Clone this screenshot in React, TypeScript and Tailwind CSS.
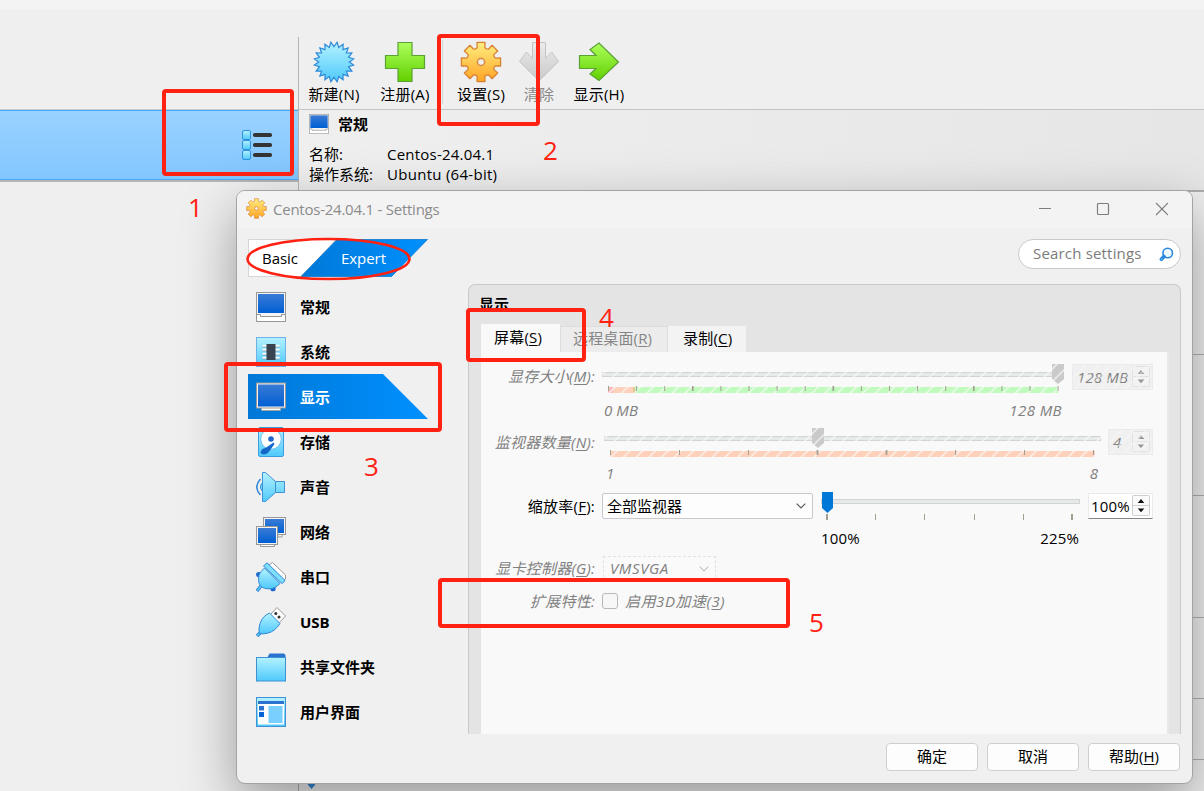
import type { ReactNode } from 'react';

const NAV_ITEMS = [
  { label: '常规', icon: GeneralIcon },
  { label: '系统', icon: SystemIcon },
  { label: '显示', icon: DisplayIcon, active: true },
  { label: '存储', icon: StorageIcon },
  { label: '声音', icon: AudioIcon },
  { label: '网络', icon: NetworkIcon },
  { label: '串口', icon: SerialIcon },
  { label: 'USB', icon: UsbIcon },
  { label: '共享文件夹', icon: FolderIcon },
  { label: '用户界面', icon: InterfaceIcon },
];

// Section dividers of the details pane that stay visible right of the dialog
const DETAIL_LINES = [163, 141, 122, 81, 61];

export default function App() {
  return (
    <div className="relative flex h-[791px] w-[1204px] flex-col overflow-hidden bg-[#efefef] font-['Open_Sans','Noto_Sans_CJK_SC',sans-serif] text-[15px] leading-5 text-black">
      <Gradients />
      <div className="h-[9px] shrink-0 bg-[#f3f3f3]" />
      <div className="flex min-h-0 flex-1">
        <MachineList />
        <main className="mt-7 flex flex-1 flex-col border-l border-[#b4b4b4]">
          <Toolbar />
          <Details />
        </main>
      </div>
      <SettingsDialog />
      <Annotations />
    </div>
  );
}

function MachineList() {
  return (
    <aside className="w-[298px] pt-[100px]">
      <div className="border-b-2 border-t border-b-[#b5b5b5] border-t-[#c8c8c8]">
        <div className="flex h-[70px] items-center justify-end border-y border-[#44aaff] bg-linear-to-b from-[#9ad2ff] to-[#82c6ff] pr-[25px]">
          <svg width="32" height="32" viewBox="0 0 32 32">
            {[1, 11, 21].map((y) => (
              <g key={y}>
                <rect x="1.5" y={y + 0.5} width="8" height="9" rx="1.5" fill="url(#sky)" stroke="#2f90e0" />
                <rect x="12" y={y + 3} width="19" height="4" rx="1.8" fill="#343434" />
              </g>
            ))}
          </svg>
        </div>
      </div>
    </aside>
  );
}

function Toolbar() {
  return (
    <div className="flex h-[73px] shrink-0 border-b border-[#c4c4c4]">
      <ToolButton className="w-[70px]" label="新建(N)" icon={<NewIcon />} />
      <ToolButton className="w-[72px]" label="注册(A)" icon={<AddIcon />} />
      <div className="mt-[3px] h-16 w-0.5 border-r border-[#d4d4d4]" />
      <ToolButton className="w-[76px]" label="设置(S)" icon={<GearIcon size={42} />} />
      <ToolButton className="w-10 text-[#8a8a8a]" label="清除" icon={<DiscardIcon />} />
      <ToolButton className="w-20" label="显示(H)" icon={<ShowIcon />} />
    </div>
  );
}

function ToolButton({ label, icon, className }: { label: string; icon: ReactNode; className: string }) {
  return (
    <div className={`flex flex-col items-center pt-1 ${className}`}>
      {icon}
      <span className="mt-px whitespace-nowrap tracking-[0.2px]">{label}</span>
    </div>
  );
}

function Details() {
  return (
    <div className="flex flex-1 flex-col">
      <div className="h-[82px] shrink-0 border-b-2 border-[#adadad] bg-linear-to-r from-[#efefef] to-[#e6e6e6] pl-2.5 pt-[3px]">
        <div className="flex items-center gap-[9px]">
          <GeneralIcon size={20} />
          <span className="text-[15px] font-bold leading-[22px]">常规</span>
        </div>
        <dl className="mt-[9px] grid grid-cols-[78px_1fr]">
          <dt>名称:</dt>
          <dd className="tracking-[0.22px]">Centos-24.04.1</dd>
          <dt>操作系统:</dt>
          <dd className="tracking-[0.28px]">Ubuntu (64-bit)</dd>
        </dl>
      </div>
      {DETAIL_LINES.map((h) => (
        <div key={h} className="shrink-0 border-b border-[#b0b0b0]" style={{ height: h }} />
      ))}
      <svg className="ml-2" width="9" height="32" viewBox="0 0 9 32">
        <path d="M1 22h7v3l-3.500 4L1 25z" fill="#3488d6" />
      </svg>
    </div>
  );
}

function SettingsDialog() {
  return (
    <div className="absolute left-[236px] top-[190px] flex h-[594px] w-[957px] flex-col overflow-hidden rounded-[9px] border border-[#a3a3a3] bg-[#f0f0f0] shadow-[0_20px_54px_rgba(0,0,0,0.36)]">
      <TitleBar />
      <div className="flex justify-between pl-[11px] pr-[11px] pt-[11px]">
        <ModeSwitch />
        <div className="flex h-[30px] w-[163px] items-center justify-between rounded-full border-[1.5px] border-[#c9c9c9] bg-white pl-3.5 pr-1.5 text-[#7b7b7b]">
          <span className="whitespace-nowrap pb-0.5 tracking-[0.18px]">Search settings</span>
          <SearchIcon />
        </div>
      </div>
      <div className="flex">
        <nav className="w-[231px] pl-[11px] pt-[7px]">
          {NAV_ITEMS.map((item) => (
            <NavItem key={item.label} {...item} />
          ))}
        </nav>
        <DisplayPage />
      </div>
      <div className="flex justify-end gap-[9px] pr-3 pt-[9px]">
        <DialogButton>确定</DialogButton>
        <DialogButton>取消</DialogButton>
        <DialogButton>
          帮助(<Key>H</Key>)
        </DialogButton>
      </div>
    </div>
  );
}

function TitleBar() {
  return (
    <header className="flex h-[37px] shrink-0 items-center justify-between bg-[#f3f3f3] pb-0.5 pl-[9px] pr-6 text-[#8b8b8b]">
      <div className="flex items-center gap-1.5">
        <GearIcon size={21} />
        <span className="tracking-[-0.24px]">Centos-24.04.1 - Settings</span>
      </div>
      <svg width="130" height="14" viewBox="0 0 130 14" fill="none" stroke="#7e7e7e">
        <path d="M1 6.5h12" />
        <rect x="59.5" y="1.5" width="11" height="11" rx="1" strokeWidth="1.2" />
        <path d="M118 1l12 12M130 1l-12 12" strokeWidth="1.1" />
      </svg>
    </header>
  );
}

function ModeSwitch() {
  return (
    <div className="relative h-[38px] w-[180px]">
      <svg className="absolute inset-0" width="180" height="38" viewBox="0 0 180 38">
        <path d="M.5.5H88L53 37.5H.5z" fill="#fff" stroke="#d5d5d5" />
        <path d="M89 .5h90.5l-36 37H53z" fill="url(#accent)" stroke="#0a78cf" strokeWidth=".8" />
      </svg>
      <div className="relative flex pl-3.5 pt-[9px]">
        <span className="w-[79px] tracking-[-0.05px]">Basic</span>
        <span className="tracking-[-0.05px] text-white">Expert</span>
      </div>
    </div>
  );
}

type IconProps = { size?: number };

function NavItem({ label, icon: Icon, active }: { label: string; icon: (p: IconProps) => ReactNode; active?: boolean }) {
  return (
    <div
      className={`flex h-[45px] w-[180px] items-center gap-3.5 pl-2 font-bold ${
        active ? 'bg-linear-to-r from-[#0078d7] to-[#0090ff] text-white [clip-path:polygon(0_0,75%_0,100%_100%,0_100%)]' : ''
      }`}
    >
      <Icon />
      <span className="whitespace-nowrap">{label}</span>
    </div>
  );
}

function DisplayPage() {
  return (
    <section className="mt-[7px] flex h-[450px] w-[713px] flex-col rounded-t-[7px] border border-b-0 border-[#c9c9c9] bg-[#e4e4e4] pl-3 pr-[11px]">
      <h2 className="-ml-0.5 h-[39px] pt-[9px] font-bold">显示</h2>
      <div className="flex items-end">
        <div className="h-7 w-[79px] bg-[#f9f9f9] pl-[13px] pt-[3px] tracking-[0.2px]">
          屏幕(<Key>S</Key>)
        </div>
        <div className="h-[26px] w-[108px] border border-b-0 border-[#dcdcdc] bg-[#ececec] pl-3 pt-px tracking-[0.15px] text-[#868686]">
          远程桌面(<Key>R</Key>)
        </div>
        <div className="h-[26px] w-[78px] bg-[#f3f3f3] pl-[15px] pt-0.5 tracking-[0.2px]">
          录制(<Key>C</Key>)
        </div>
      </div>
      <div className="flex-1 border-r-2 border-[#e9e9e9] bg-[#f9f9f9]">
        <MemoryRow />
        <MonitorRow />
        <ScaleRow />
        <div className="flex h-[33px] items-center italic text-[#808080]">
          <Label className="pb-0.5">
            显卡控制器(<Key>G</Key>):
          </Label>
          <div className="ml-2 flex h-[26px] w-[113px] items-center justify-between border border-dashed border-[#e2e2e2] bg-[#fafafa] px-1.5">
            <span className="pb-0.5 tracking-[0.6px]">VMSVGA</span>
            <Chevron color="#c2c2c2" />
          </div>
        </div>
        <div className="flex h-[33px] items-center italic text-[#808080]">
          <Label className="pb-0.5">扩展特性:</Label>
          <span className="mb-0.5 ml-[7px] mr-[7px] size-4 rounded-[3px] border border-[#b9b9b9] bg-[#f7f7f7]" />
          <span className="pb-0.5 tracking-[0.55px]">
            启用3D加速(<Key>3</Key>)
          </span>
        </div>
      </div>
    </section>
  );
}

function MemoryRow() {
  const ticks = Array.from({ length: 17 }, (_, i) => 6.5 + i * 28.1);
  return (
    <div className="flex h-[72px] italic text-[#808080]">
      <Label className="pt-3.5">
        显存大小(<Key>M</Key>):
      </Label>
      <div className="ml-[7px] mt-2.5 w-[463px]">
        <svg className="block" width="463" height="36" viewBox="0 0 463 36">
          <rect x=".5" y="10.5" width="456" height="4" fill="#e7eaea" stroke="#d3d3d3" />
          <rect x="6" y="25" width="5" height="6" fill="#ffb9b9" />
          <rect x="11" y="25" width="21" height="6" fill="#ffd0ba" />
          <rect x="31" y="25" width="2" height="6" fill="#dcca90" />
          <rect x="33" y="25" width="423" height="6" fill="#c0fbbd" />
          <rect y="2" width="463" height="30" fill="url(#hatch)" />
          {ticks.map((x, i) => (
            <path key={x} d={`M${x} 24v5`} stroke="#a39f92" strokeWidth={i % 5 === 3 ? 1.7 : 1} />
          ))}
          <path d="M450 2h12v15l-6 5-6-5z" fill="#cacaca" />
          <rect x="449" y="2" width="14" height="21" fill="url(#hatch)" />
        </svg>
        <div className="flex justify-between pl-0.5 pr-[3px] pt-0.5 tracking-[0.1px]">
          <span>0 MB</span>
          <span className="tracking-[0.4px]">128 MB</span>
        </div>
      </div>
      <Spinner className="ml-[7px] mt-3 w-[81px] pl-1" value="128 MB" disabled />
    </div>
  );
}

function MonitorRow() {
  return (
    <div className="flex h-16 italic text-[#808080]">
      <Label className="pt-2">
        监视器数量(<Key>N</Key>):
      </Label>
      <div className="ml-[9px] mt-0.5 w-[497px]">
        <svg className="block" width="497" height="34" viewBox="0 0 497 34">
          <rect x=".5" y="10.5" width="496" height="4" fill="#e7eaea" stroke="#d3d3d3" />
          <rect x="6" y="25" width="485" height="6" fill="#ffd0ba" />
          <rect y="2" width="497" height="30" fill="url(#hatch)" />
          {Array.from({ length: 8 }, (_, i) => (
            <path key={i} d={`M${6.5 + i * 69} 24v5`} stroke="#a39f92" strokeWidth={i === 3 || i === 4 ? 1.8 : 1} />
          ))}
          <path d="M208 2h12v15l-6 5-6-5z" fill="#cacaca" />
          <rect x="207" y="2" width="14" height="21" fill="url(#hatch)" />
        </svg>
        <div className="flex justify-between pl-0.5 pr-[3px] pt-[3px]">
          <span>1</span>
          <span>8</span>
        </div>
      </div>
      <Spinner className="ml-[7px] mt-[5px] w-[45px] pl-1" value="4" disabled />
    </div>
  );
}

function ScaleRow() {
  return (
    <div className="flex h-16">
      <Label className="pt-2">
        缩放率(<Key>F</Key>):
      </Label>
      <div className="ml-[7px] mt-[5px] flex h-[26px] w-[211px] items-center justify-between rounded-[2px] border border-[#c9c9c9] bg-[#fdfdfd] pl-1 pr-1.5">
        全部监视器
        <Chevron color="#5c5c5c" />
      </div>
      <div className="ml-[7px] w-[260px]">
        <svg className="block" width="260" height="36" viewBox="0 0 260 36">
          <rect x="1.5" y="11.5" width="258" height="4" fill="#e7eaea" stroke="#d3d3d3" />
          {[7, 55.5, 104.5, 154.5, 203.5, 252].map((x, i) => (
            <path key={x} d={`M${x} 26v6`} stroke="#a39f92" strokeWidth={i % 5 === 0 ? 2 : 1} />
          ))}
          <path d="M2 4h11v16l-5.5 5L2 20z" fill="#0078d7" />
        </svg>
        <div className="flex justify-between pl-px pr-px pt-1 tracking-[0.15px]">
          <span>100%</span>
          <span>225%</span>
        </div>
      </div>
      <Spinner className="ml-2 mt-[5px] w-[65px] pl-0.5" value="100%" />
    </div>
  );
}

function Label({ children, className = '' }: { children: ReactNode; className?: string }) {
  return <div className={`w-[114px] shrink-0 whitespace-nowrap text-right tracking-[0.25px] ${className}`}>{children}</div>;
}

function Spinner({ value, disabled, className }: { value: string; disabled?: boolean; className: string }) {
  const line = disabled ? '#e2e2e2' : '#cfcfcf';
  return (
    <div
      className={`relative flex h-[26px] items-center justify-between border pr-px ${
        disabled ? 'border-[#ebebeb] bg-[#f0f0f0]' : 'border-[#ebebeb] border-b-[#858585] bg-white'
      } ${className}`}
    >
      <span className="whitespace-nowrap tracking-[0.15px]">{value}</span>
      <svg className="shrink-0" width="19" height="22" viewBox="0 0 19 22">
        <rect x=".5" y=".5" width="17" height="20" rx="1" fill={disabled ? '#f2f2f2' : '#fafafa'} stroke={line} />
        <path d="M.5 10.5h17" stroke={line} />
        <path d="M9 4l3.3 4H5.7zM9 17.3l3.3-3.8H5.7z" fill={disabled ? '#969696' : '#111'} />
      </svg>
      {disabled && (
        <svg className="absolute inset-0 size-full opacity-70">
          <rect width="100%" height="100%" fill="url(#hatch)" />
        </svg>
      )}
    </div>
  );
}

function DialogButton({ children }: { children: ReactNode }) {
  return (
    <button className="h-7 w-[92px] rounded-[4px] border border-[#cfcfcf] bg-[#fdfdfd] pb-0.5 text-center">{children}</button>
  );
}

// Mnemonic letter
function Key({ children }: { children: ReactNode }) {
  return <u className="underline decoration-1 underline-offset-2">{children}</u>;
}

function Chevron({ color }: { color: string }) {
  return (
    <svg width="10" height="6" viewBox="0 0 10 6" fill="none" stroke={color} strokeWidth="1.2">
      <path d="M.7.7L5 5 9.3.7" />
    </svg>
  );
}

function Annotations() {
  return (
    <div className="pointer-events-none absolute inset-0 text-[26px] leading-5 text-[#ff2213]">
      <Mark className="left-[162px] top-[89px] h-[87px] w-[132px]" />
      <Mark className="left-[437px] top-[34px] h-[92px] w-[103px]" />
      <Mark className="left-[224px] top-[362px] h-[70px] w-[218px]" />
      <Mark className="left-[466px] top-[308px] h-[54px] w-[120px]" />
      <Mark className="left-[438px] top-[578px] h-[50px] w-[352px]" />
      <svg className="absolute left-[245px] top-[237px]" width="168" height="45" viewBox="0 0 168 45">
        <ellipse cx="83.5" cy="22" rx="81" ry="20" fill="none" stroke="#ff2213" strokeWidth="2.6" />
      </svg>
      <span className="absolute left-[188px] top-[197px]">1</span>
      <span className="absolute left-[543px] top-[140px]">2</span>
      <span className="absolute left-[364px] top-[456px]">3</span>
      <span className="absolute left-[599px] top-[307px]">4</span>
      <span className="absolute left-[809px] top-[612px]">5</span>
    </div>
  );
}

function Mark({ className }: { className: string }) {
  return <div className={`absolute rounded-[4px] border-4 border-[#ff2213] ${className}`} />;
}

function Gradients() {
  return (
    <svg className="absolute" width="0" height="0">
      <defs>
        <linearGradient id="sky" x2="0" y2="1">
          <stop stopColor="#b4f2ff" />
          <stop offset="1" stopColor="#4fc9fb" />
        </linearGradient>
        <linearGradient id="screen" x2="0" y2="1">
          <stop stopColor="#3a7bd5" />
          <stop offset="1" stopColor="#005fd3" />
        </linearGradient>
        <linearGradient id="green" x2="0" y2="1">
          <stop stopColor="#adff5c" />
          <stop offset="1" stopColor="#62d000" />
        </linearGradient>
        <linearGradient id="orange" x2="0" y2="1">
          <stop stopColor="#ffee80" />
          <stop offset="1" stopColor="#ffa425" />
        </linearGradient>
        <linearGradient id="grey" x2="0" y2="1">
          <stop stopColor="#ebebeb" />
          <stop offset="1" stopColor="#c9c9c9" />
        </linearGradient>
        <linearGradient id="accent">
          <stop stopColor="#0078d7" />
          <stop offset="1" stopColor="#0090ff" />
        </linearGradient>
        <pattern id="hatch" width="12.7" height="12.7" patternUnits="userSpaceOnUse">
          <path d="M-1 13.7L13.7-1M-1 1L1-1M11.7 13.7l2-2" stroke="#fafafa" strokeWidth="1.2" />
        </pattern>
      </defs>
    </svg>
  );
}

function polar(r: number, deg: number) {
  const a = (deg * Math.PI) / 180;
  return `${(21 + r * Math.sin(a)).toFixed(2)},${(21 - r * Math.cos(a)).toFixed(2)}`;
}

function NewIcon() {
  const points = Array.from({ length: 40 }, (_, i) => polar(i % 2 ? 20 : 15.3, i * 9)).join(' ');
  return (
    <svg width="42" height="42" viewBox="0 0 42 42">
      <polygon points={points} fill="url(#sky)" stroke="#2d8ad8" strokeWidth="1.2" />
    </svg>
  );
}

function AddIcon() {
  return (
    <svg width="42" height="42" viewBox="0 0 42 42">
      <path d="M14 1.500h14v13h12.500v13H28v13H14v-13H1.500v-13H14z" fill="url(#green)" stroke="#5aa136" strokeWidth="1.2" />
    </svg>
  );
}

function GearIcon({ size }: { size: number }) {
  const points = Array.from({ length: 8 }, (_, i) => {
    const a = i * 45;
    return [polar(14.8, a - 15), polar(20, a - 11.5), polar(20, a + 11.5), polar(14.8, a + 15), polar(14.2, a + 22.5)].join(' ');
  }).join(' ');
  return (
    <svg width={size} height={size} viewBox="0 0 42 42">
      <polygon points={points} fill="url(#orange)" stroke="#d98232" strokeWidth="1.3" strokeLinejoin="round" />
      <circle cx="21" cy="21" r="3.6" fill="#f0efed" stroke="#d9904a" strokeWidth="1.6" />
    </svg>
  );
}

function DiscardIcon() {
  return (
    <svg className="shrink-0" width="42" height="42" viewBox="0 0 42 42">
      <path d="M14.5 1.5h13v16l6-6.500 7 9.500-19.500 19.500L1.500 20.500l7-9.500 6 6.500z" fill="url(#grey)" stroke="#c4c4c4" />
    </svg>
  );
}

function ShowIcon() {
  return (
    <svg width="42" height="42" viewBox="0 0 42 42">
      <path d="M1.5 14.500h16.500l-6-6 9-6.500L40.500 21 21 39.500l-9-6.500 6-5.500H1.500z" fill="url(#green)" stroke="#5aa136" strokeWidth="1.2" />
    </svg>
  );
}

function SearchIcon() {
  return (
    <svg width="15" height="15" viewBox="0 0 15 15" fill="none" stroke="#2b86dd">
      <circle cx="8.7" cy="6" r="4.8" fill="#eefaff" strokeWidth="1.6" />
      <path d="M5 9.5l-2.6 2.8" strokeWidth="3.6" strokeLinecap="round" />
      <path d="M2.6 12.2l.2-.2" stroke="#49c0f5" strokeWidth="1.6" strokeLinecap="round" />
    </svg>
  );
}

function Icon30({ size = 30, children }: { size?: number; children: ReactNode }) {
  return (
    <svg className="shrink-0" width={size} height={size} viewBox="0 0 30 30">
      {children}
    </svg>
  );
}

function GeneralIcon({ size }: IconProps) {
  return (
    <Icon30 size={size}>
      <rect x=".5" y=".5" width="29" height="29" fill="#f4f4f4" stroke="#979797" />
      <rect x="2" y="2" width="26" height="19" fill="url(#screen)" />
      <path d="M.5 22.5h4v2h21v-2h4v7H.5z" fill="#fff" stroke="#979797" />
    </Icon30>
  );
}

function SystemIcon() {
  return (
    <Icon30>
      <rect x=".5" y=".5" width="29" height="29" fill="url(#sky)" stroke="#6db1e6" />
      {[9, 13, 17, 21].map((y) => (
        <g key={y}>
          <path d={`M6.5 ${y}h17`} stroke="#fff" strokeWidth="2.4" />
          <path d={`M6.5 ${y + 1}h17`} stroke="#5a8aa0" strokeWidth=".7" />
        </g>
      ))}
      <rect x="10.5" y="7" width="9" height="16" fill="#39424f" />
    </Icon30>
  );
}

function DisplayIcon() {
  return (
    <Icon30>
      <path d="M5.5 25h19v3.5h-19z" fill="#fff" stroke="#a3a3a3" />
      <rect x=".5" y="1" width="29" height="25" fill="#f3f3f3" stroke="#979797" />
      <rect x="2" y="2.5" width="26" height="22" fill="url(#screen)" />
    </Icon30>
  );
}

function StorageIcon() {
  return (
    <Icon30>
      <rect x="2.5" y=".5" width="25" height="29" rx="1.5" fill="url(#sky)" stroke="#3f9bdf" />
      <circle cx="15" cy="12" r="10.3" fill="#fff" stroke="#5fb4ec" strokeWidth=".8" />
      <circle cx="15" cy="12" r="2.8" fill="#2166c8" />
      <path d="M4.5 25.5q.5-4 5-4.5l8-5.5 1 1.5-5 7q-3 4.500-8 3z" fill="#1467c6" />
    </Icon30>
  );
}

function AudioIcon() {
  return (
    <Icon30>
      <path d="M4.500 7Q-3 15 4.500 23" fill="none" stroke="#3488d6" strokeWidth="1.5" />
      <path d="M6.5 10.5Q2.5 15 6.5 19.500" fill="#75d9fb" stroke="#3488d6" />
      <path d="M6.500.5h3l10 9h9v11h-9l-10 9h-3z" fill="url(#sky)" stroke="#3f91d5" strokeLinejoin="round" />
      <path d="M19.500 9.500v11" stroke="#3f91d5" />
    </Icon30>
  );
}

function NetworkIcon() {
  return (
    <Icon30>
      <path d="M22 17h4v3h-4z" fill="#fff" stroke="#999" />
      <rect x="7.5" y=".5" width="22" height="17" fill="#f3f3f3" stroke="#989898" />
      <rect x="9" y="2" width="19" height="14" fill="url(#screen)" />
      <path d="M4.5 26.5h14v3h-14z" fill="#fff" stroke="#999" />
      <rect x=".5" y="9.5" width="21" height="18" fill="#f3f3f3" stroke="#989898" />
      <rect x="2" y="11" width="18" height="15" fill="url(#screen)" />
    </Icon30>
  );
}

function SerialIcon() {
  return (
    <Icon30>
      <path d="M13 3l3.500-2.500 13 12.500v4l-2 1z" fill="#fff" stroke="#999" />
      <circle cx="2.700" cy="12.500" r="2.600" fill="#1b68ce" />
      <circle cx="17" cy="26.700" r="2.600" fill="#1b68ce" />
      <path d="M1 29l4-5" stroke="#3488d6" strokeWidth="3.5" />
      <path d="M1.5 28.500l4-5" stroke="#5ccdfa" strokeWidth="1.5" />
      <path d="M8.500 6L24 21.500l-4 3.500q-7 3.500-13.500.5Q1 22 3 13q1-3 5.500-7z" fill="url(#sky)" stroke="#3488d6" />
      <path d="M7.500 4L11 .8 29.200 18.500 26 21.500z" fill="#7ddffc" stroke="#3488d6" />
    </Icon30>
  );
}

function UsbIcon() {
  return (
    <Icon30>
      <path d="M14 8l7-7.500L29.500 9 23 16z" fill="#fff" stroke="#999" />
      <circle cx="19.8" cy="6.5" r="1.5" fill="#333" />
      <circle cx="23" cy="10" r="1.5" fill="#333" />
      <path d="M1 29l4-4" stroke="#3488d6" strokeWidth="3.5" />
      <path d="M1.5 28.500l4-4" stroke="#5ccdfa" strokeWidth="1.5" />
      <path d="M13.500 6L24 16.500q-5 8-12 9.500-5 1.500-8.500.5-1.500-4 .5-10Q6.500 9 13.500 6z" fill="url(#sky)" stroke="#3488d6" />
    </Icon30>
  );
}

function FolderIcon() {
  return (
    <Icon30>
      <path d="M11 6l2.500-4.500h14.500l1.500 1.500v4H11z" fill="#2b73cf" />
      <rect x=".5" y="5.5" width="29" height="23.5" fill="url(#sky)" stroke="#3f91d5" />
    </Icon30>
  );
}

function InterfaceIcon() {
  return (
    <Icon30>
      <rect x=".5" y=".5" width="29" height="29" fill="url(#sky)" stroke="#3f91d5" />
      <rect x="2" y="7" width="26" height="20.5" fill="#fff" />
      <rect x="2" y="4" width="26" height="3" fill="#2b73cf" />
      <rect x="3" y="9" width="5" height="4.5" fill="#2b73cf" />
      <rect x="3" y="15" width="5" height="5" fill="#0064d6" />
      <rect x="12.5" y="9" width="14" height="17" fill="#79d0ff" />
    </Icon30>
  );
}
